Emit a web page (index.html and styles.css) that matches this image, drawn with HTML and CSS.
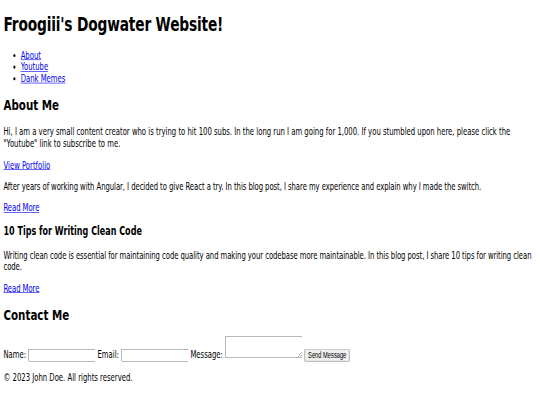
FILE: index.html
```html
<!DOCTYPE html>
<html lang="en">
<head>
<meta charset="utf-8">
<title>Froogiii's Dogwater Website!</title>
<link rel="stylesheet" href="styles.css">
</head>
<body class="site">
<div class="page">
  <header class="site-header">
    <h1 class="site-title">Froogiii's Dogwater Website!</h1>
    <nav class="site-nav">
      <ul class="nav-list">
        <li class="nav-item"><a class="link" href="#about">About</a></li>
        <li class="nav-item"><a class="link" href="#youtube">Youtube</a></li>
        <li class="nav-item"><a class="link" href="#memes">Dank Memes</a></li>
      </ul>
    </nav>
  </header>
  <main class="content">
    <section class="section" id="about">
      <h2 class="section-title">About Me</h2>
      <p class="text">Hi, I am a very small content creator who is trying to hit 100 subs. In the long run I am going for 1,000. If you stumbled upon here, please click the "Youtube" link to subscribe to me.</p>
      <p class="text"><a class="link" href="#portfolio">View Portfolio</a></p>
    </section>
    <section class="section blog">
      <article class="post">
        <p class="text">After years of working with Angular, I decided to give React a try. In this blog post, I share my experience and explain why I made the switch.</p>
        <p class="text"><a class="link" href="#post1">Read More</a></p>
      </article>
      <article class="post">
        <h3 class="post-title">10 Tips for Writing Clean Code</h3>
        <p class="text">Writing clean code is essential for maintaining code quality and making your codebase more maintainable. In this blog post, I share 10 tips for writing clean code.</p>
        <p class="text"><a class="link" href="#post2">Read More</a></p>
      </article>
    </section>
    <section class="section" id="contact">
      <h2 class="section-title">Contact Me</h2>
      <form class="contact-form">
        <label class="field-label" for="name">Name:</label>
        <input class="field" type="text" id="name">
        <label class="field-label" for="email">Email:</label>
        <input class="field" type="email" id="email">
        <label class="field-label" for="message">Message:</label>
        <textarea class="field-area" id="message"></textarea>
        <button class="send-btn" type="submit">Send Message</button>
      </form>
    </section>
  </main>
  <footer class="site-footer">
    <p class="text">&copy; 2023 John Doe. All rights reserved.</p>
  </footer>
</div>
</body>
</html>
```
FILE: styles.css
```css
html, body {
  margin: 0;
  padding: 0;
  background: #ffffff;
}

.site {
  overflow: hidden;
}

.page {
  display: flow-root;
  width: 1250px;
  padding: 0 8px;
  font-family: "DejaVu Sans", Verdana, sans-serif;
  font-size: 16px;
  line-height: normal;
  color: #000000;
  transform: scale(0.43, 0.613);
  transform-origin: 0 0;
}

.site-title {
  font-size: 32px;
  font-weight: bold;
  letter-spacing: -0.4px;
  margin: 21.44px 0;
}

.nav-list {
  margin: 16px 0;
  padding-left: 40px;
  list-style: disc;
}

.link {
  color: #0000ee;
  text-decoration: underline;
}

.section-title {
  font-size: 24px;
  font-weight: bold;
  margin: 19.92px 0;
}

.post-title {
  font-size: 18.72px;
  font-weight: bold;
  margin: 18.72px 0;
}

.text {
  margin: 16px 0;
}

.post .text {
  letter-spacing: -0.15px;
}

.contact-form {
  margin: 0;
}

.field-label {
  font: inherit;
}

.field {
  box-sizing: border-box;
  width: 156px;
}

.field-area {
  box-sizing: border-box;
  width: 180px;
}
```
